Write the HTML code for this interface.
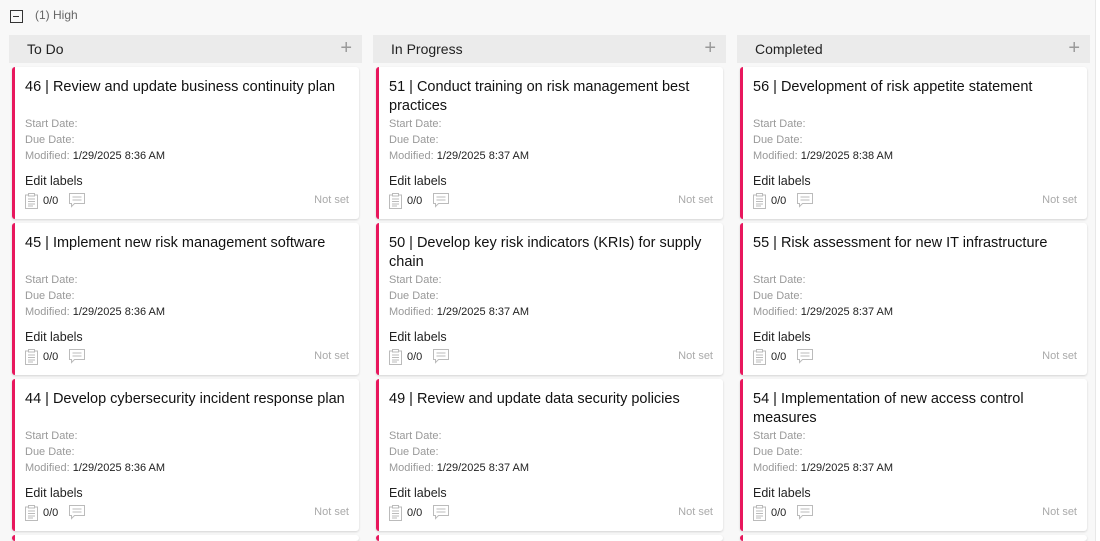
<!DOCTYPE html>
<html style="overflow:hidden;height:541px"><head><style>
*{box-sizing:border-box;margin:0;padding:0}
body{width:1100px;height:541px;overflow:hidden;background:#fff;font-family:"Liberation Sans",sans-serif;position:relative}
.panel{position:absolute;left:0;top:0;width:1096px;height:541px;background:#f8f8f8;border-right:1px solid #e8e8e8}
.grp{position:absolute;left:10px;top:8px;font-size:12px;color:#666}
.grp .box{position:absolute;left:0;top:2px;width:13px;height:13px;border:1.5px solid #333}
.grp .box:after{content:"";position:absolute;left:2px;top:4.5px;width:6px;height:1.5px;background:#333}
.grp span{position:absolute;left:25px;top:0;white-space:nowrap}
.hdr{position:absolute;top:35px;height:28px;width:353px;background:#ebebeb;font-size:14px;color:#222;padding:6px 0 0 18px}
.hdr .plus{position:absolute;right:10px;top:3px;font-size:20px;color:#999;line-height:20px}
.card{position:absolute;width:347px;height:152px;background:#fff;border-left:3px solid #e8175d;border-radius:3px;box-shadow:0 1px 2px rgba(0,0,0,.15);overflow:hidden}
.t{position:absolute;left:10px;top:11px;width:325px;font-size:14.5px;line-height:19px;color:#111}
.f{position:absolute;left:10px;font-size:11px;color:#999}
.f b{font-weight:normal;color:#222}
.el{position:absolute;left:10px;top:107px;font-size:12.5px;color:#222}
.ic{position:absolute;left:10px;top:126px;height:16px;font-size:11px;color:#222}
.ns{position:absolute;right:10px;top:127px;font-size:11px;color:#aaa}
</style></head><body>
<div class="panel"></div>
<div class="grp"><div class="box"></div><span>(1) High</span></div>
<div class="hdr" style="left:9px">To Do<span class="plus">+</span></div>
<div class="hdr" style="left:373px">In Progress<span class="plus">+</span></div>
<div class="hdr" style="left:737px">Completed<span class="plus">+</span></div>
<div id="c"></div>
<script>
var cols=[[12,[["46 | Review and update business continuity plan","8:36"],["45 | Implement new risk management software","8:36"],["44 | Develop cybersecurity incident response plan","8:36"]]],
[376,[["51 | Conduct training on risk management best practices","8:37"],["50 | Develop key risk indicators (KRIs) for supply chain","8:37"],["49 | Review and update data security policies","8:37"]]],
[740,[["56 | Development of risk appetite statement","8:38"],["55 | Risk assessment for new IT infrastructure","8:37"],["54 | Implementation of new access control measures","8:37"]]]];
var ico='<svg width="13" height="16" viewBox="0 0 13 16" style="position:absolute;left:0;top:0" fill="none" stroke="#bbb" stroke-width="1"><rect x="0.5" y="2" width="12" height="13.5"/><rect x="3.5" y="0.5" width="6" height="2.5" fill="#fff"/><path d="M3 6h7M3 8.5h7M3 11h7M3 13h5"/></svg><span style="position:absolute;left:18px;top:2px">0/0</span><svg width="16" height="15" viewBox="0 0 16 15" style="position:absolute;left:44px;top:0" fill="none" stroke="#bbb" stroke-width="1"><path d="M0.5 0.5h15v10h-10l-3 3v-3h-2z"/><path d="M3.5 4h9M3.5 7h9"/></svg>';
var h='';
cols.forEach(function(c){c[1].forEach(function(d,i){
h+='<div class="card" style="left:'+c[0]+'px;top:'+(67+i*156)+'px"><div class="t">'+d[0]+'</div><div class="f" style="top:51px">Start Date:</div><div class="f" style="top:67px">Due Date:</div><div class="f" style="top:83px">Modified: <b>1/29/2025 '+d[1]+' AM</b></div><div class="el">Edit labels</div><div class="ic">'+ico+'</div><div class="ns">Not set</div></div>';});
h+='<div class="card" style="left:'+c[0]+'px;top:535px;height:6px"></div>';});
document.getElementById('c').innerHTML=h;
</script>
</body></html>
